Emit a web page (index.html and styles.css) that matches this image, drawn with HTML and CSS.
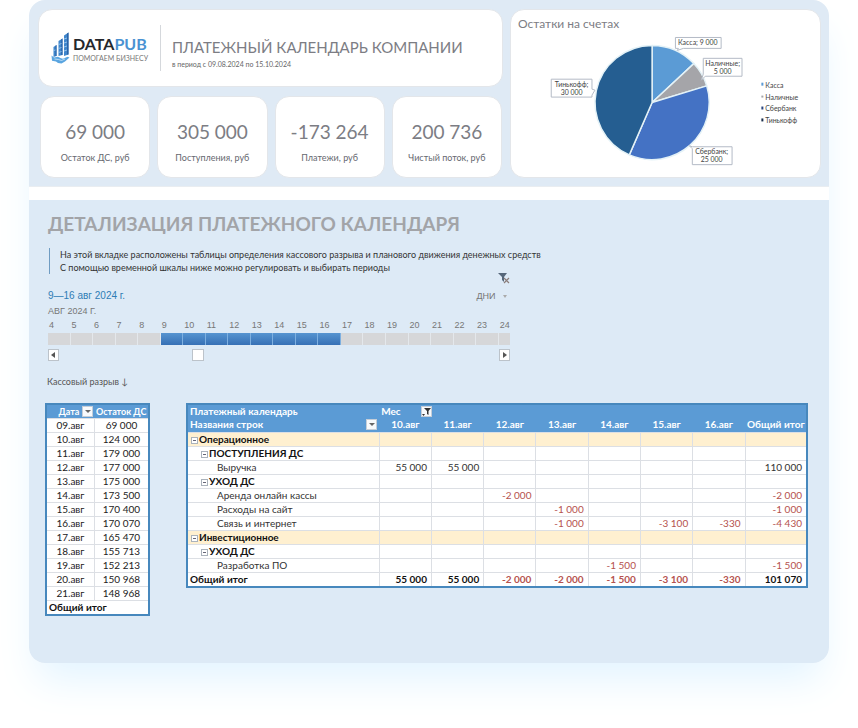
FILE: index.html
```html
<!DOCTYPE html>
<html lang="ru">
<head>
<meta charset="utf-8">
<title>Платежный календарь компании</title>
<link rel="stylesheet" href="styles.css">
</head>
<body>
<main class="page">
  <section class="summary">
    <div class="summary-left">
      <header class="card masthead">
        <div class="brand">
          <svg class="brand-mark" viewBox="0 0 18 34" aria-hidden="true">
            <path d="M2 16l3-2v11l-3 1zM7 10l4-2.500v16.500l-4 1zM12.500 4.500l4.500-3v22l-4.500 1.500z" fill="#3f86cc"/>
            <path d="M4 14.700l1-.7v11h-1zM9.800 8.300l1.200-.8v16.500h-1.200zM15.500 2.500l1.500-1v22h-1.500z" fill="#2a62a6"/>
            <path d="M12.500 8l3-1M12.500 12l3-1M12.500 16l3-1M12.500 20l3-1M7 13.500l3-1M7 17.500l3-1M7 21.500l3-1M2 19.500l2-.5" stroke="#a5cff2" stroke-width=".8"/>
            <path d="M0 24.500l2.500 2 4-.7 3 1.500 2 .5 4.500-2 2 .7-4.500 4-3.500 2-3.500-.5-2-1.500-4-.7z" fill="#5aa5e0"/>
            <path d="M3 28l4 .5 3 1 3.500-1.500" fill="none" stroke="#d0e8fa" stroke-width=".8"/>
          </svg>
          <div class="brand-text">
            <div class="brand-name">DATA<span>PUB</span></div>
            <div class="brand-tag">ПОМОГАЕМ БИЗНЕСУ</div>
          </div>
        </div>
        <div class="headline">
          <h1>ПЛАТЕЖНЫЙ КАЛЕНДАРЬ КОМПАНИИ</h1>
          <p>в период с 09.08.2024 по 15.10.2024</p>
        </div>
      </header>
      <div class="stats">
        <div class="card stat"><strong>69 000</strong><span>Остаток ДС, руб</span></div>
        <div class="card stat"><strong>305 000</strong><span>Поступления, руб</span></div>
        <div class="card stat"><strong>-173 264</strong><span>Платежи, руб</span></div>
        <div class="card stat"><strong>200 736</strong><span>Чистый поток, руб</span></div>
      </div>
    </div>
    <div class="card chart">
      <h2>Остатки на счетах</h2>
      <svg viewBox="0 24 311 145" role="img" aria-label="Остатки на счетах">
        <g stroke="#e4f2f7" stroke-width="1.500" stroke-linejoin="round">
          <path d="M142 94V36.500A57.500 57.500 0 0 1 184 54.800Z" fill="#5b9bd5"/>
          <path d="M142 94L184 54.800A57.500 57.500 0 0 1 197 77.200Z" fill="#a5a5a9"/>
          <path d="M142 94L197 77.200A57.500 57.500 0 0 1 119.100 146.700Z" fill="#4472c4"/>
          <path d="M142 94L119.100 146.700A57.500 57.500 0 0 1 142 36.500Z" fill="#255e91"/>
        </g>
        <g class="callouts">
          <path d="M165.500 28.500h46v11h-38l-6 2 1-2h-3z"/>
          <path d="M193.500 49.500h39v18h-37l-4 4 2-6z"/>
          <path d="M182.500 138.500h40v18h-40v-16l-3-3z"/>
          <path d="M40.500 70.500h41v10l3 1-3 5v2h-41z"/>
        </g>
        <g class="chart-text" text-anchor="middle">
          <text x="188" y="36">Касса; 9 000</text>
          <text x="213" y="57">Наличные;</text><text x="213" y="65">5 000</text>
          <text x="202" y="146">Сбербанк;</text><text x="202" y="154">25 000</text>
          <text x="61" y="78">Тинькофф;</text><text x="61" y="86">30 000</text>
        </g>
        <g class="chart-text">
          <rect x="252" y="74" width="2" height="3" fill="#5b9bd5"/><text x="256" y="79">Касса</text>
          <rect x="252" y="87" width="2" height="2" fill="#a5a5a9"/><text x="256" y="91">Наличные</text>
          <rect x="252" y="98" width="2" height="3" fill="#2b4680"/><text x="256" y="103">Сбербанк</text>
          <rect x="252" y="110" width="2" height="3" fill="#1b2f4c"/><text x="256" y="115">Тинькофф</text>
        </g>
      </svg>
    </div>
  </section>

  <section class="details">
    <h2 class="details-title">ДЕТАЛИЗАЦИЯ ПЛАТЕЖНОГО КАЛЕНДАРЯ</h2>
    <p class="note">На этой вкладке расположены таблицы определения кассового разрыва и планового движения денежных средств<br>С помощью временной шкалы ниже можно регулировать и выбирать периоды</p>

    <div class="timeline">
      <div class="timeline-top">
        <button class="clear" type="button" aria-label="Очистить фильтр">
          <svg viewBox="0 0 12 12" aria-hidden="true"><path d="M0 1h9L6 5v5L4 8V5z" fill="#56677a"/><path d="M6 6l5 5M11 6l-5 5" stroke="#8b7d7a" stroke-width="1.200"/></svg>
        </button>
      </div>
      <div class="timeline-head">
        <span class="range-label">9—16 авг 2024 г.</span>
        <label class="scale"><select aria-label="Масштаб шкалы"><option>ДНИ</option></select></label>
      </div>
      <div class="month">АВГ 2024 Г.</div>
      <ol class="days">
        <li>4</li><li>5</li><li>6</li><li>7</li><li>8</li><li class="on">9</li><li class="on">10</li><li class="on">11</li><li class="on">12</li><li class="on">13</li><li class="on">14</li><li class="on">15</li><li class="on">16</li><li>17</li><li>18</li><li>19</li><li>20</li><li>21</li><li>22</li><li>23</li><li class="half">24</li>
      </ol>
      <div class="scroller">
        <button type="button" aria-label="Назад"><svg viewBox="0 0 5 6" aria-hidden="true"><path d="M4 0v6L0 3z"/></svg></button>
        <input type="range" min="0" max="100" value="31" aria-label="Прокрутка шкалы">
        <button type="button" aria-label="Вперед"><svg viewBox="0 0 5 6" aria-hidden="true"><path d="M1 0v6l4-3z"/></svg></button>
      </div>
    </div>

    <p class="gap-label">Кассовый разрыв ↓</p>

    <div class="tables">
      <table class="grid balance">
        <colgroup><col class="c-date"><col></colgroup>
        <thead><tr><th><span class="head-cell">Дата<button class="drop" type="button" aria-label="Фильтр по дате"></button></span></th><th>Остаток ДС</th></tr></thead>
        <tbody>
          <tr><td>09.авг</td><td>69 000</td></tr>
          <tr><td>10.авг</td><td>124 000</td></tr>
          <tr><td>11.авг</td><td>179 000</td></tr>
          <tr><td>12.авг</td><td>177 000</td></tr>
          <tr><td>13.авг</td><td>175 000</td></tr>
          <tr><td>14.авг</td><td>173 500</td></tr>
          <tr><td>15.авг</td><td>170 400</td></tr>
          <tr><td>16.авг</td><td>170 070</td></tr>
          <tr><td>17.авг</td><td>165 470</td></tr>
          <tr><td>18.авг</td><td>155 713</td></tr>
          <tr><td>19.авг</td><td>152 213</td></tr>
          <tr><td>20.авг</td><td>150 968</td></tr>
          <tr><td>21.авг</td><td>148 968</td></tr>
        </tbody>
        <tfoot><tr><th colspan="2">Общий итог</th></tr></tfoot>
      </table>

      <table class="grid calendar">
        <colgroup><col class="c-name"><col span="7" class="c-day"><col class="c-total"></colgroup>
        <thead>
          <tr><th>Платежный календарь</th><th colspan="8" class="mes"><span class="head-cell">Мес<button class="drop funnel" type="button" aria-label="Фильтр по месяцу"><svg viewBox="0 0 9 8" aria-hidden="true"><path d="M2 0h7L6.500 3v4L5 6V3z"/><path d="M0 6h3L1.500 8z"/></svg></button></span></th></tr>
          <tr><th><span class="head-cell">Названия строк<button class="drop" type="button" aria-label="Фильтр строк"></button></span></th><th>10.авг</th><th>11.авг</th><th>12.авг</th><th>13.авг</th><th>14.авг</th><th>15.авг</th><th>16.авг</th><th>Общий итог</th></tr>
        </thead>
        <tbody>
          <tr class="group"><th><button class="fold" type="button" aria-label="Свернуть"></button>Операционное</th><td></td><td></td><td></td><td></td><td></td><td></td><td></td><td></td></tr>
          <tr class="sub"><th><button class="fold" type="button" aria-label="Свернуть"></button>ПОСТУПЛЕНИЯ ДС</th><td></td><td></td><td></td><td></td><td></td><td></td><td></td><td></td></tr>
          <tr class="item"><th>Выручка</th><td>55 000</td><td>55 000</td><td></td><td></td><td></td><td></td><td></td><td>110 000</td></tr>
          <tr class="sub"><th><button class="fold" type="button" aria-label="Свернуть"></button>УХОД ДС</th><td></td><td></td><td></td><td></td><td></td><td></td><td></td><td></td></tr>
          <tr class="item"><th>Аренда онлайн кассы</th><td></td><td></td><td class="neg">-2 000</td><td></td><td></td><td></td><td></td><td class="neg">-2 000</td></tr>
          <tr class="item"><th>Расходы на сайт</th><td></td><td></td><td></td><td class="neg">-1 000</td><td></td><td></td><td></td><td class="neg">-1 000</td></tr>
          <tr class="item"><th>Связь и интернет</th><td></td><td></td><td></td><td class="neg">-1 000</td><td></td><td class="neg">-3 100</td><td class="neg">-330</td><td class="neg">-4 430</td></tr>
          <tr class="group"><th><button class="fold" type="button" aria-label="Свернуть"></button>Инвестиционное</th><td></td><td></td><td></td><td></td><td></td><td></td><td></td><td></td></tr>
          <tr class="sub"><th><button class="fold" type="button" aria-label="Свернуть"></button>УХОД ДС</th><td></td><td></td><td></td><td></td><td></td><td></td><td></td><td></td></tr>
          <tr class="item"><th>Разработка ПО</th><td></td><td></td><td></td><td></td><td class="neg">-1 500</td><td></td><td></td><td class="neg">-1 500</td></tr>
        </tbody>
        <tfoot>
          <tr><th>Общий итог</th><td>55 000</td><td>55 000</td><td class="neg">-2 000</td><td class="neg">-2 000</td><td class="neg">-1 500</td><td class="neg">-3 100</td><td class="neg">-330</td><td>101 070</td></tr>
        </tfoot>
      </table>
    </div>
  </section>
</main>
</body>
</html>
```
FILE: styles.css
```css
* { box-sizing: border-box; }

body {
  margin: 0;
  background: #fff;
  color: #333;
  font-family: "Century Gothic", Lato, "Open Sans", sans-serif;
  font-size: 10px;
  line-height: 14px;
}

h1, h2, p, ol { margin: 0; padding: 0; font-weight: 400; }

button { padding: 0; font: inherit; cursor: pointer; }

.page {
  margin: 0 29px 66px;
  border-radius: 16px;
  box-shadow: 0 24px 40px -8px #e2f4ff;
}

.summary {
  display: grid;
  grid-template-columns: minmax(0, 465fr) minmax(0, 311fr);
  gap: 7px;
  padding: 9px 8px 8px 9px;
  background: #dfeaf5;
  border-radius: 16px 16px 0 0;
  border-bottom: 1px solid #e9edf1;
}

.summary-left { display: flex; flex-direction: column; gap: 9px; }

.card {
  background: #fff;
  border: 1px solid #e3e6ea;
  border-radius: 14px;
}

.masthead { display: flex; align-items: center; height: 78px; padding: 0 12px; }

.brand {
  display: flex;
  align-items: center;
  gap: 3px;
  height: 46px;
  padding-right: 13px;
  border-right: 1px solid #d5d8dc;
}

.brand-mark { width: 19px; height: 34px; }
.brand-text { width: 74px; white-space: nowrap; }
.brand-name { font-size: 16px; line-height: 20px; font-weight: 700; color: #25272c; }
.brand-name span { color: #4a92d2; }
.brand-tag { font-size: 7px; line-height: 9px; color: #777; }

.headline { padding: 12px 0 0 11px; white-space: nowrap; }
.headline h1 { font-size: 15px; line-height: 20px; color: #7c7d84; }
.headline p { font-size: 7px; line-height: 14px; color: #666; }

.stats { display: grid; grid-template-columns: repeat(4, 1fr); gap: 7px; padding: 0 1px 0 2px; }

.stat {
  display: flex;
  flex-direction: column;
  align-items: center;
  gap: 7px;
  height: 82px;
  padding-top: 22px;
}

.stat strong { font-size: 19px; line-height: 26px; font-weight: 400; color: #7c7d84; }
.stat span { font-size: 9px; line-height: 12px; color: #666870; }

.chart { display: flex; flex-direction: column; }
.chart h2 { padding: 5px 7px 0; font-size: 12px; line-height: 18px; color: #7c7d84; }
.chart svg { display: block; width: 100%; }
.chart-text { font-size: 7px; fill: #444; }
.callouts { fill: #fff; stroke: #b3bac6; stroke-width: 1; }

.details {
  margin-top: 13px;
  padding: 10px 21px 47px 16px;
  background: #ddeaf6;
  border-radius: 0 0 16px 16px;
}

.page > .details { position: relative; }

.page > .details::before {
  content: "";
  position: absolute;
  left: 0;
  right: 0;
  top: -13px;
  height: 13px;
  background: #fff;
}

.details-title { padding-left: 3px; font-size: 19px; line-height: 28px; font-weight: 700; color: #a2a4a8; }

.note {
  margin: 10px 0 0 4px;
  padding-left: 10px;
  border-left: 1px solid #6f9cc2;
  font-size: 9px;
  line-height: 13px;
}

.timeline { width: 61%; max-width: 520px; padding-left: 3px; font-family: "Liberation Sans", Arial, sans-serif; color: #777; }

.timeline-top { display: flex; justify-content: flex-end; height: 10px; }
.clear { width: 12px; height: 12px; margin-top: -2px; border: 0; background: none; }
.clear svg { display: block; width: 12px; height: 12px; }

.timeline-head { display: flex; justify-content: space-between; margin-top: 4px; line-height: 16px; }
.range-label { font-size: 10px; color: #2f7db5; }
.scale { display: flex; align-items: center; gap: 3px; padding-right: 3px; }
.scale select { appearance: none; width: 24px; border: 0; padding: 0; background: none; font: inherit; font-size: 9px; color: #777; }
.scale::after { content: ""; border: 2px solid transparent; border-top: 3px solid #aaa; border-bottom: 0; }

.month { font-size: 9px; line-height: 15px; }

.days { display: flex; list-style: none; font-size: 9px; line-height: 13px; }
.days li { flex: 2 1 0; min-width: 0; padding-left: 1px; }
.days .half { flex-grow: 1; }

.days li::after {
  content: "";
  display: block;
  height: 12px;
  margin: 1px 0 0 -1px;
  border-right: 1px solid #e4e8ec;
  background: #d6d7d9;
}

.days .on::after { background: linear-gradient(#5694d0, #3670b5); border-right-color: #7eb0e0; }
.days .half::after { border-right: 0; }

.scroller { display: flex; align-items: center; margin-top: 4px; }

.scroller button {
  display: grid;
  place-items: center;
  width: 11px;
  height: 12px;
  background: #fff;
  border: 1px solid #bcc3ca;
}

.scroller svg { width: 5px; height: 6px; fill: #555; }
.scroller input { appearance: none; flex: 1; min-width: 0; height: 12px; margin: 0; background: none; }

.scroller input::-webkit-slider-thumb {
  appearance: none;
  width: 12px;
  height: 12px;
  background: #fff;
  border: 1px solid #bcc3ca;
}

.gap-label { margin: 14px 0 14px 2px; font-size: 9px; color: #555; }

.tables { display: grid; grid-template-columns: 105fr 622fr; gap: 36px; align-items: start; }

.grid { width: 100%; table-layout: fixed; border-collapse: collapse; border: 2px solid #4788bd; background: #fff; }
.grid th, .grid td { height: 14px; padding: 0 4px; line-height: 13px; white-space: nowrap; border: 1px solid #dcdfe4; }
.grid thead th { background: #5b9bd5; border: 0; color: #fff; font-weight: 700; }
.grid tfoot th, .grid tfoot td { border-top: 1px solid #4788bd; font-weight: 700; color: #111; }
.grid tfoot th { padding-left: 2px; text-align: left; }

.balance { color: #222; }
.balance td { text-align: center; }
.balance thead th { padding: 0 1px; font-size: 9px; }
.balance thead .head-cell { justify-content: flex-end; gap: 3px; }
.c-date { width: 47%; }

.calendar th { padding-left: 2px; text-align: left; }
.calendar td { text-align: right; }
.calendar thead th + th { padding: 0 2px; text-align: center; }
.c-name { width: 31%; }
.c-total { width: 10%; }

.head-cell { display: flex; align-items: center; justify-content: space-between; }
.mes .head-cell { justify-content: flex-start; gap: 20px; }

.drop {
  display: grid;
  place-items: center;
  width: 11px;
  height: 11px;
  margin-right: -2px;
  border: 1px solid #c5ced8;
  background: #f8fafc;
}

.balance .drop { margin-right: 0; }
.drop:empty::after { content: ""; border: 3px solid transparent; border-top: 3px solid #666; border-bottom: 0; }
.funnel svg { width: 9px; height: 8px; fill: #333; }

.group th, .group td { background: #fff0d0; }
.group th, .sub th { color: #111; font-weight: 700; }
.sub th { padding-left: 12px; }
.item th { padding-left: 29px; font-weight: 400; }
.neg, .grid tfoot .neg { color: #b5524e; }

.fold {
  display: inline-block;
  width: 7px;
  height: 7px;
  margin: 0 1px 0 1px;
  border: 1px solid #aab2bb;
  background: linear-gradient(#667, #667) center / 3px 1px no-repeat #fff;
}
```
